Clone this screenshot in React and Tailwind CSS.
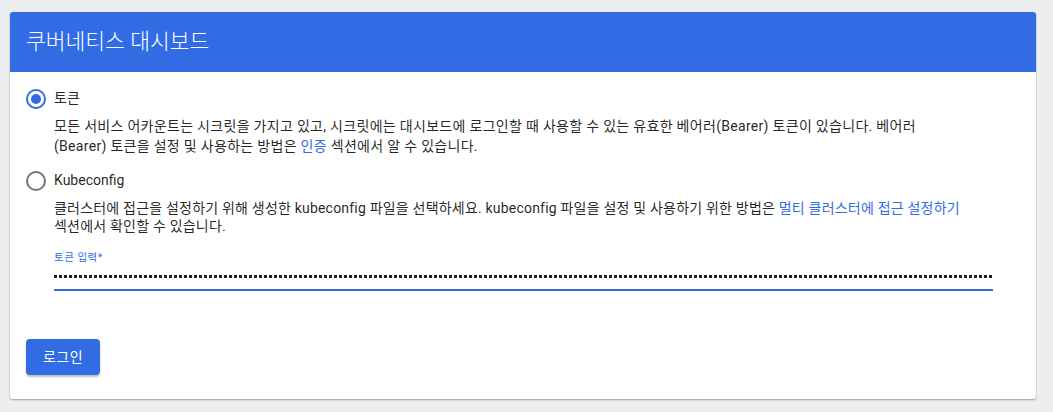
import React from "react";

const font = { fontFamily: 'Roboto, "Noto Sans CJK KR", sans-serif' };

function Radio({ checked }) {
  return checked ? (
    <span className="flex h-[20px] w-[20px] shrink-0 items-center justify-center rounded-full border-2 border-[#326ce5]">
      <span className="h-[10px] w-[10px] rounded-full bg-[#326ce5]" />
    </span>
  ) : (
    <span className="h-[20px] w-[20px] shrink-0 rounded-full border-2 border-[#757575]" />
  );
}

export default function App() {
  return (
    <div className="min-h-[412px] bg-[#edeef0] px-[10px] pt-[12px]" style={font}>
      <div className="w-[1026px] overflow-hidden rounded-[3px] bg-white shadow-[0_1px_2px_rgba(0,0,0,0.35)]">
        <div className="flex h-[60px] items-center bg-[#326ce5] px-[16px] text-[21.5px] font-light text-white">
          쿠버네티스 대시보드
        </div>
        <div className="px-[16px] pb-[24px] pt-[16px] text-[14px] text-[rgba(0,0,0,0.87)]">
          <div className="flex items-center gap-[8px]">
            <Radio checked />
            <span className="tracking-[0.2px]">토큰</span>
          </div>
          <p className="mt-[7px] w-[929px] break-keep pl-[28px] leading-[20px] tracking-[0.3px]">
            모든 서비스 어카운트는 시크릿을 가지고 있고, 시크릿에는 대시보드에 로그인할 때 사용할 수 있는 유효한 베어러(Bearer) 토큰이 있습니다. 베어러(Bearer) 토큰을 설정 및 사용하는 방법은{" "}
            <span className="text-[#326ce5]">인증</span> 섹션에서 알 수 있습니다.
          </p>
          <div className="mt-[14px] flex items-center gap-[8px]">
            <Radio />
            <span>Kubeconfig</span>
          </div>
          <p className="mt-[8px] w-[942px] break-keep pl-[28px] leading-[18px] tracking-[0.2px]">
            클러스터에 접근을 설정하기 위해 생성한 kubeconfig 파일을 선택하세요. kubeconfig 파일을 설정 및 사용하기 위한 방법은{" "}
            <span className="text-[#326ce5]">멀티 클러스터에 접근 설정하기</span> 섹션에서 확인할 수 있습니다.
          </p>
          <div className="ml-[28px] mt-[17px] w-[939px]">
            <div className="text-[10.5px] leading-[12px] tracking-[0.5px] text-[#326ce5]">토큰 입력*</div>
            <svg width="939" height="4" className="mt-[10px] block">
              <defs>
                <pattern id="dots" width="5" height="4" patternUnits="userSpaceOnUse">
                  <rect x="0" y="1" width="3" height="3" fill="#202124" />
                </pattern>
              </defs>
              <rect x="0" y="0" width="939" height="4" fill="url(#dots)" />
            </svg>
            <div className="mt-[11px] h-[2px] bg-[#326ce5]" />
          </div>
          <button className="mt-[48px] h-[36px] w-[74px] rounded-[4px] bg-[#326ce5] text-[14px] tracking-[0.5px] text-white shadow-[0_2px_2px_rgba(0,0,0,0.25)]">
            로그인
          </button>
        </div>
      </div>
    </div>
  );
}
